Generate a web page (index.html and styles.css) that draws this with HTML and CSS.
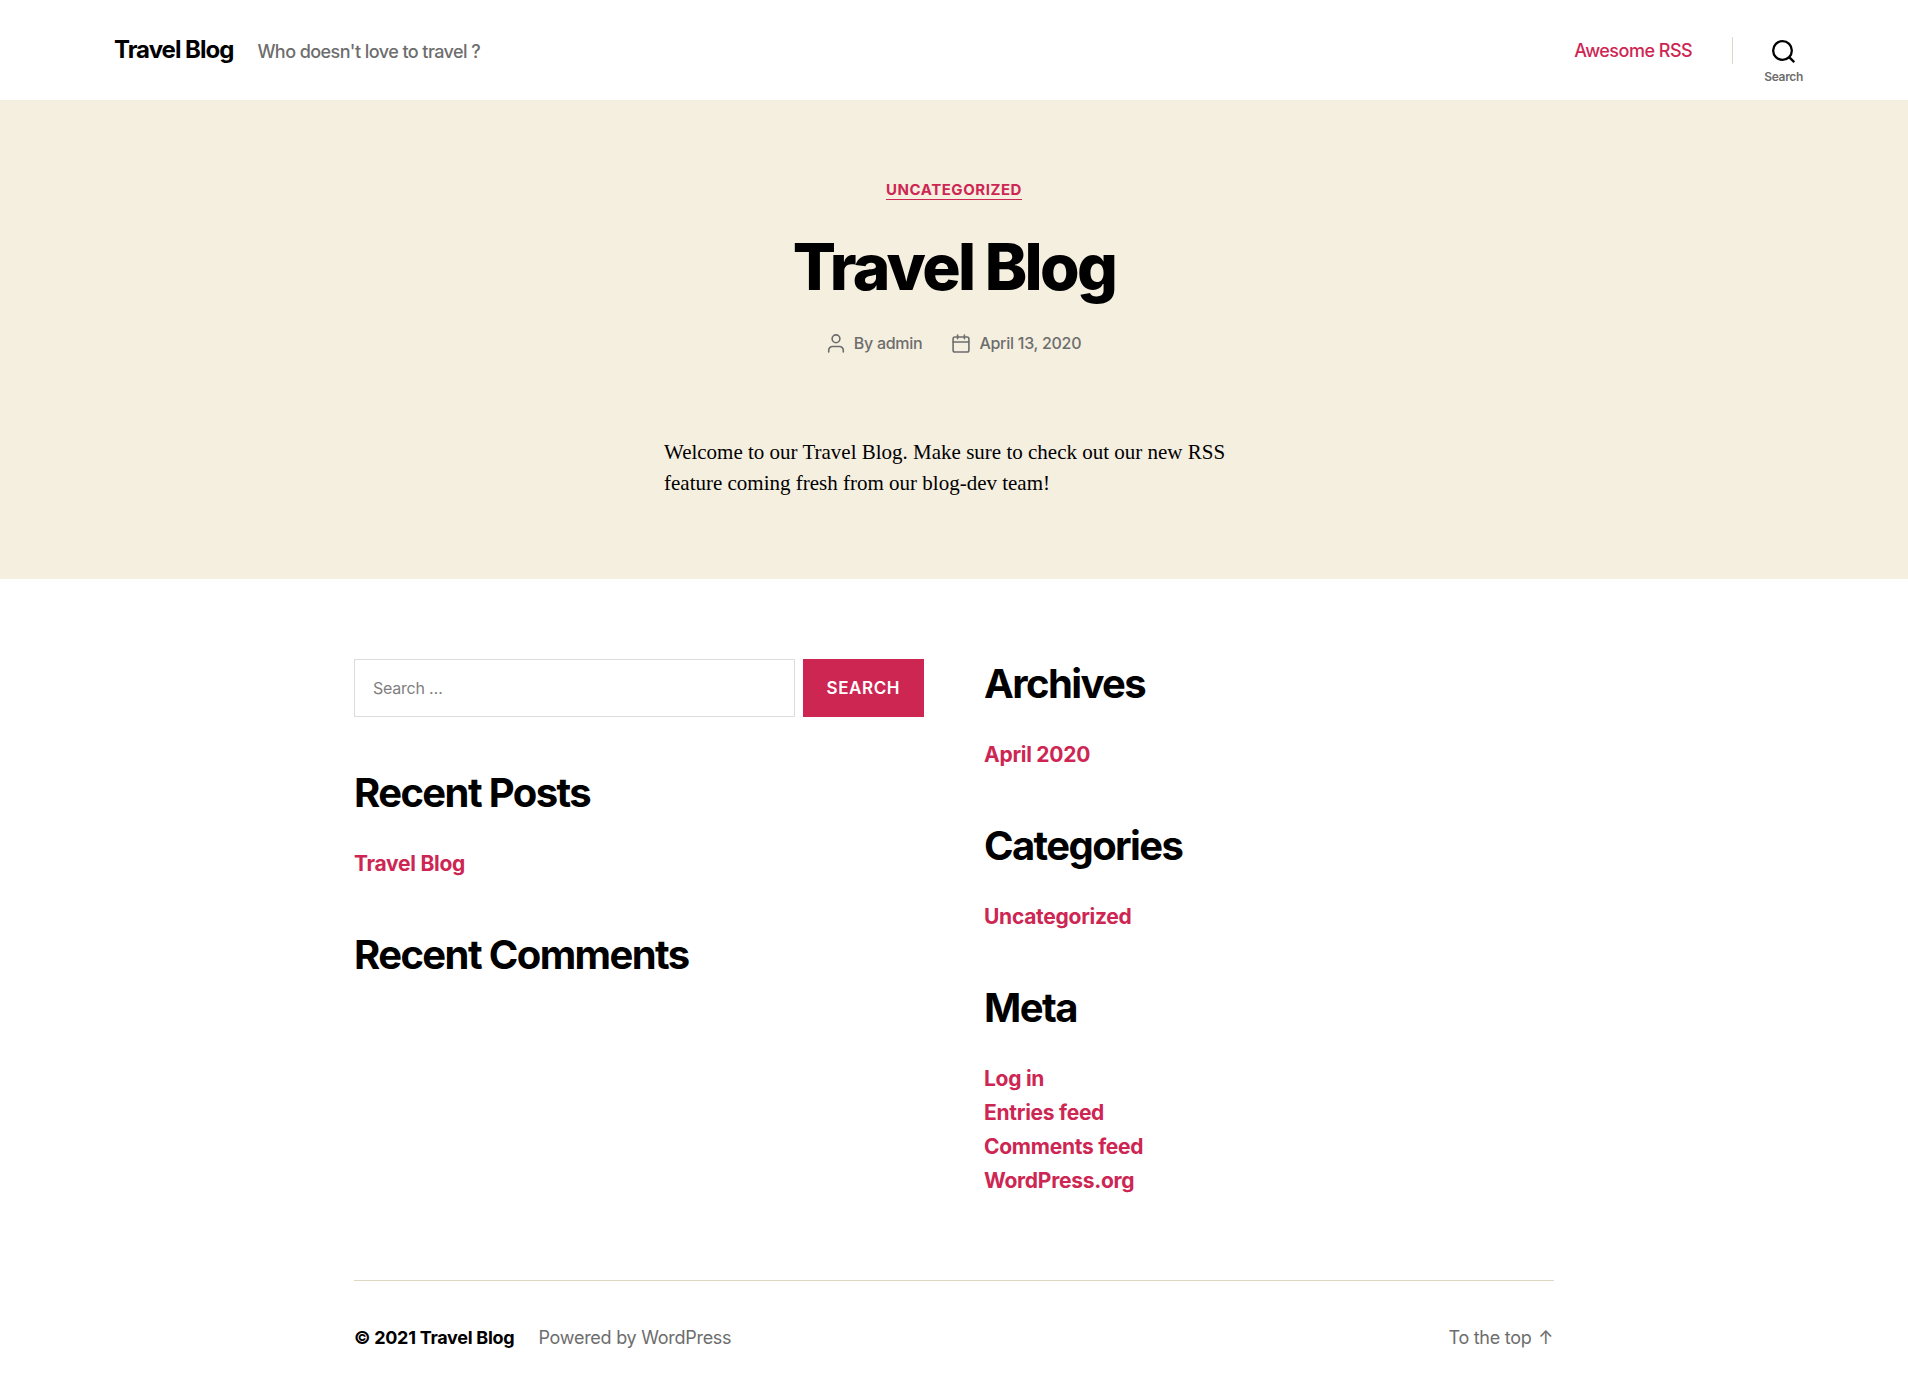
FILE: index.html
```html
<!DOCTYPE html>
<html lang="en">
<head>
<meta charset="utf-8">
<meta name="viewport" content="width=device-width, initial-scale=1">
<title>Travel Blog</title>
<link rel="stylesheet" href="styles.css">
</head>
<body>
<header class="site-header">
  <div class="header-inner">
    <div class="header-titles">
      <a class="site-title" href="#">Travel Blog</a>
      <span class="site-description">Who doesn't love to travel ?</span>
    </div>
    <div class="header-navigation">
      <nav><a class="menu-link" href="#">Awesome RSS</a></nav>
      <div class="toggle-wrapper">
        <button class="search-toggle" type="button">
          <svg width="23" height="23" viewBox="0 0 23 23" fill="none" stroke="currentColor" stroke-width="2.3" aria-hidden="true"><circle cx="10.5" cy="10.5" r="9.35"/><path d="M16.9 16.9l5.3 5.3"/></svg>
          <span class="toggle-text">Search</span>
        </button>
      </div>
    </div>
  </div>
</header>
<main class="post">
  <a class="category" href="#">Uncategorized</a>
  <h1 class="entry-title">Travel Blog</h1>
  <ul class="post-meta">
    <li class="meta-item">
      <svg width="18" height="19" viewBox="0 0 18 19" fill="none" stroke="currentColor" stroke-width="1.6" stroke-linecap="round" aria-hidden="true"><circle cx="9" cy="4.8" r="3.9"/><path d="M1.7 18v-1.8a3.7 3.7 0 0 1 3.7-3.7h7.2a3.7 3.7 0 0 1 3.7 3.7V18"/></svg>
      <span>By <a class="meta-link" href="#">admin</a></span>
    </li>
    <li class="meta-item">
      <svg width="18" height="19" viewBox="0 0 18 19" fill="none" stroke="currentColor" stroke-width="1.6" stroke-linecap="round" aria-hidden="true"><rect x="1.1" y="3" width="15.8" height="15" rx="1.8"/><path d="M1.1 8h15.8M5.6 1v3.8M12.4 1v3.8"/></svg>
      <a class="meta-link" href="#">April 13, 2020</a>
    </li>
  </ul>
  <p class="entry-content">Welcome to our Travel Blog. Make sure to check out our new RSS feature coming fresh from our blog-dev team!</p>
</main>
<div class="footer-area">
  <aside class="widgets">
    <div class="widget-column">
      <form class="search-form">
        <input class="search-field" type="search" placeholder="Search …" aria-label="Search for:">
        <button class="search-submit" type="button">Search</button>
      </form>
      <section class="widget">
        <h2 class="widget-title">Recent Posts</h2>
        <ul class="widget-list"><li><a href="#">Travel Blog</a></li></ul>
      </section>
      <section class="widget">
        <h2 class="widget-title">Recent Comments</h2>
      </section>
    </div>
    <div class="widget-column">
      <section class="widget">
        <h2 class="widget-title">Archives</h2>
        <ul class="widget-list"><li><a href="#">April 2020</a></li></ul>
      </section>
      <section class="widget">
        <h2 class="widget-title">Categories</h2>
        <ul class="widget-list"><li><a href="#">Uncategorized</a></li></ul>
      </section>
      <section class="widget">
        <h2 class="widget-title">Meta</h2>
        <ul class="widget-list">
          <li><a href="#">Log in</a></li>
          <li><a href="#">Entries feed</a></li>
          <li><a href="#">Comments feed</a></li>
          <li><a href="#">WordPress.org</a></li>
        </ul>
      </section>
    </div>
  </aside>
  <footer class="site-footer">
    <div class="credits">
      <span class="copyright">© 2021 <a href="#">Travel Blog</a></span>
      <a class="footer-link" href="#">Powered by WordPress</a>
    </div>
    <a class="footer-link" href="#">To the top <span class="arrow">↑</span></a>
  </footer>
</div>
</body>
</html>
```
FILE: styles.css
```css
* {
  box-sizing: border-box;
}

body {
  margin: 0;
  background: #fff;
  color: #000;
  font-family: Inter, "Liberation Sans", sans-serif;
  font-size: 18px;
  line-height: 27px;
  letter-spacing: -0.015em;
}

h1, h2, p, ul {
  margin: 0;
  padding: 0;
}

ul {
  list-style: none;
}

a {
  color: inherit;
  text-decoration: none;
}

button, input {
  font-family: inherit;
}

.header-inner {
  display: flex;
  align-items: center;
  justify-content: space-between;
  width: calc(100% - 80px);
  max-width: 1680px;
  min-height: 100px;
  margin: 0 auto;
}

.header-titles {
  display: flex;
  align-items: baseline;
  gap: 24px;
}

.site-title {
  font-size: 24px;
  font-weight: 700;
  letter-spacing: -0.0415625em;
}

.site-description {
  color: #6d6d6d;
  font-weight: 500;
  letter-spacing: -0.0311em;
}

.header-navigation {
  display: flex;
  align-items: center;
  gap: 40px;
  margin-right: -9px;
}

.menu-link {
  color: #cd2653;
  font-weight: 500;
  letter-spacing: -0.0277em;
}

.toggle-wrapper {
  display: flex;
  align-items: center;
  height: 27px;
  border-left: 1px solid #dcd7ca;
}

.search-toggle {
  display: flex;
  flex-direction: column;
  align-items: center;
  gap: 8px;
  padding: 22px 0 0 31px;
  border: 0;
  background: none;
  color: #000;
  cursor: pointer;
}

.toggle-text {
  color: #6d6d6d;
  font-size: 12px;
  font-weight: 600;
  line-height: 12px;
  letter-spacing: -0.0277em;
}

.post {
  display: flex;
  flex-direction: column;
  align-items: center;
  padding: 80px 20px;
  background: #f5efe0;
}

.category {
  border-bottom: 1px solid #cd2653;
  color: #cd2653;
  font-size: 15px;
  font-weight: 700;
  line-height: 19px;
  letter-spacing: 0.0366em;
  text-transform: uppercase;
}

.entry-title {
  margin-top: 32px;
  font-size: 64px;
  font-weight: 800;
  line-height: 70px;
  letter-spacing: -0.0415625em;
}

.post-meta {
  display: flex;
  flex-wrap: wrap;
  justify-content: center;
  gap: 30px;
  margin-top: 28px;
  color: #6d6d6d;
  font-size: 16px;
  font-weight: 500;
}

.meta-item {
  display: flex;
  align-items: center;
  gap: 9px;
}

.entry-content {
  width: 100%;
  max-width: 580px;
  margin-top: 80px;
  font-family: "Liberation Serif", serif;
  font-size: 21px;
  line-height: 31px;
  letter-spacing: normal;
}

.footer-area {
  width: calc(100% - 80px);
  max-width: 1200px;
  margin: 0 auto;
}

.widgets {
  display: grid;
  grid-template-columns: 1fr 1fr;
  gap: 60px;
  padding: 80px 0 82px;
  border-bottom: 1px solid #dfd7c0;
}

.widget-column {
  display: flex;
  flex-direction: column;
  gap: 49px;
}

.search-form {
  display: flex;
  gap: 8px;
  margin-bottom: 2px;
}

.search-field {
  flex: 1;
  min-width: 0;
  height: 58px;
  padding: 0 18px;
  border: 1px solid #dcdcdc;
  background: #fff;
  font-size: 16px;
  letter-spacing: -0.015em;
}

.search-field::placeholder {
  color: #808080;
}

.search-submit {
  padding: 0 24px;
  border: 0;
  background: #cd2653;
  color: #fff;
  font-size: 17px;
  font-weight: 600;
  letter-spacing: 0.0333em;
  text-transform: uppercase;
}

.widget-title {
  font-size: 40px;
  font-weight: 700;
  line-height: 50px;
  letter-spacing: -0.04em;
}

.widget-list {
  margin-top: 29px;
  color: #cd2653;
  font-size: 21px;
  font-weight: 700;
  line-height: 34px;
}

.site-footer {
  display: flex;
  align-items: baseline;
  justify-content: space-between;
  padding: 43px 0;
}

.credits {
  display: flex;
  align-items: baseline;
  gap: 24px;
}

.copyright {
  font-weight: 700;
}

.footer-link {
  color: #6d6d6d;
}

.arrow {
  padding: 0 1px 0 2px;
}
```
